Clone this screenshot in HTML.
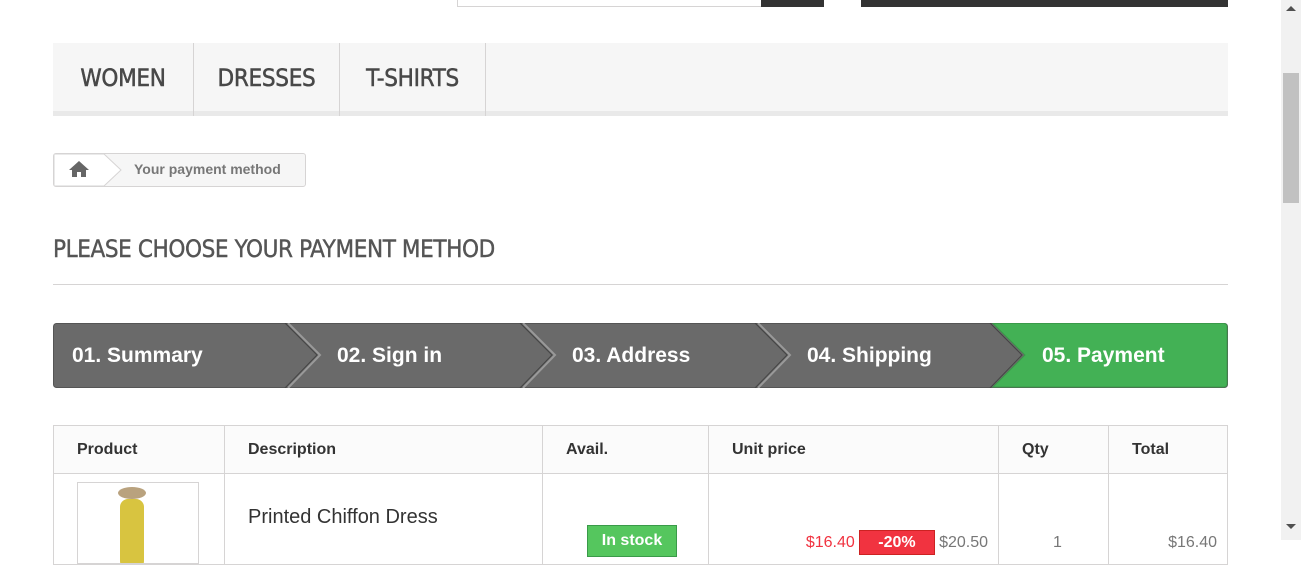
<!DOCTYPE html><html><head><style>
body{margin:0;width:1301px;height:540px;overflow:hidden;background:#fff;font-family:"Liberation Sans",sans-serif;position:relative}
.a{position:absolute}
.nav{left:53px;top:43px;width:1175px;height:68px;background:#f6f6f6;border-bottom:5px solid #e9e9e9}
.nav div{position:absolute;top:0;height:73px;border-right:1px solid #d6d4d4;font-family:"DejaVu Sans Condensed",sans-serif;font-size:24px;-webkit-text-stroke:0.5px #484848;color:#484848;line-height:70px;text-align:center;letter-spacing:-0.3px}
td,th{border:1px solid #d6d4d4;padding:0 0 0 23px;text-align:left;color:#333}
th{height:47px;font-size:16px;background:#fbfbfb}
</style></head><body>
<div class="a" style="left:457px;top:0;width:305px;height:7px;border:1px solid #d6d4d4;border-top:0;box-sizing:border-box"></div>
<div class="a" style="left:761px;top:0;width:63px;height:7px;background:#333"></div>
<div class="a" style="left:861px;top:0;width:367px;height:7px;background:#333"></div>
<div class="a nav">
<div style="left:0;width:140px">WOMEN</div>
<div style="left:141px;width:145px">DRESSES</div>
<div style="left:287px;width:145px">T-SHIRTS</div>
</div>
<div class="a" style="left:53px;top:153px;width:251px;height:32px;border:1px solid #d6d4d4;border-radius:3px;background:#f6f6f6"></div>
<svg class="a" style="left:54px;top:154px" width="70" height="32"><path d="M0 0H50L67 16L50 32H0Z" fill="#fff" stroke="#d6d4d4"/><path d="M25 7L15 16H18V23H23V18H27V23H32V16H35Z" fill="#666"/></svg>
<div class="a" style="left:134px;top:161px;font-size:14px;font-weight:bold;color:#777">Your payment method</div>
<div class="a" style="left:53px;top:235px;font-family:'DejaVu Sans Condensed',sans-serif;font-size:24px;-webkit-text-stroke:0.4px #555;color:#555;letter-spacing:-0.4px">PLEASE CHOOSE YOUR PAYMENT METHOD</div>
<div class="a" style="left:53px;top:284px;width:1175px;height:1px;background:#d6d4d4"></div>
<svg class="a" style="left:53px;top:323px" width="1175" height="65">
<rect x="0.5" y="0.5" width="1174" height="64" rx="3" fill="#6a6a6a" stroke="#555"/>
<path d="M940 0.5H1171a3 3 0 0 1 3 3V61a3 3 0 0 1-3 3H940L972 32Z" fill="#43b155" stroke="#3a9a49"/>
<g fill="none" stroke="#999" stroke-width="2"><path d="M235 0L267 32L235 65"/><path d="M470 0L502 32L470 65"/><path d="M705 0L737 32L705 65"/></g>
<g fill="none" stroke="#444" stroke-width="1"><path d="M232 0L264 32L232 65"/><path d="M467 0L499 32L467 65"/><path d="M702 0L734 32L702 65"/><path d="M937 0L969 32L937 65"/></g>
<g font-family="Liberation Sans" font-weight="bold" font-size="21" fill="#fff"><text x="19" y="39">01. Summary</text><text x="284" y="39">02. Sign in</text><text x="519" y="39">03. Address</text><text x="754" y="39">04. Shipping</text><text x="989" y="39">05. Payment</text></g>
</svg>
<table class="a" style="left:53px;top:425px;width:1175px;border-collapse:collapse">
<tr><th style="width:147px">Product</th><th style="width:294px">Description</th><th style="width:142px">Avail.</th><th style="width:266px">Unit price</th><th style="width:86px">Qty</th><th>Total</th></tr>
<tr style="height:90px"><td style="vertical-align:top;padding-top:8px"><div style="width:120px;height:80px;border:1px solid #d6d4d4;position:relative;overflow:hidden"><div style="position:absolute;left:42px;top:16px;width:24px;height:70px;background:#d8c440;border-radius:8px"></div><div style="position:absolute;left:40px;top:4px;width:28px;height:12px;background:#b9a27e;border-radius:50%"></div></div></td>
<td style="vertical-align:top;padding-top:32px;font-size:20px">Printed Chiffon Dress</td>
<td style="vertical-align:top;padding:51px 0 0 44px"><div style="width:88px;height:30px;background:#55c65e;border:1px solid #3a9a49;color:#fff;font-weight:bold;font-size:16px;text-align:center;line-height:30px">In stock</div></td>
<td style="vertical-align:top;padding:60px 10px 0 0;text-align:right;font-size:16px;color:#f13340;white-space:nowrap">$16.40 <span style="background:#f13340;color:#fff;padding:3px 18px;font-weight:bold;border:1px solid #c22">-20%</span> <span style="color:#777">$20.50</span></td>
<td style="vertical-align:top;padding-top:60px;padding-left:54px;font-size:16px;color:#777">1</td><td style="vertical-align:top;padding:60px 10px 0 0;text-align:right;font-size:16px;color:#777">$16.40</td></tr>
</table>
<div class="a" style="left:1281px;top:0;width:20px;height:540px;background:#f1f1f1"></div>
<div class="a" style="left:1283px;top:73px;width:16px;height:130px;background:#c1c1c1"></div>
<div class="a" style="left:1286px;top:6px;border:5px solid transparent;border-bottom-color:#505050;border-top:0"></div>
<div class="a" style="left:1286px;top:524px;border:5px solid transparent;border-top-color:#505050;border-bottom:0"></div>
</body></html>
